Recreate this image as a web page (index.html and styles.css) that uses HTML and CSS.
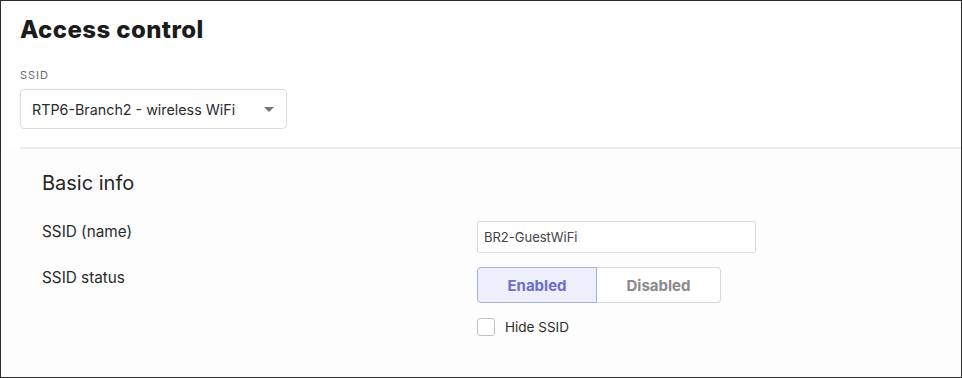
FILE: index.html
```html
<!DOCTYPE html>
<html lang="en">
  <head>
    <meta charset="UTF-8" />
    <meta name="viewport" content="width=device-width, initial-scale=1.0" />
    <title>Access control</title>
    <link rel="stylesheet" href="styles.css">
  </head>

  <body>
    <div class="marco">
      <div class="cabecera">
        <h1>Access control</h1>
        <label class="etiqueta" for="ssid">SSID</label>
        <div class="selector" id="ssid">
          <span>RTP6-Branch2 - wireless WiFi</span>
          <span class="flecha"></span>
        </div>
      </div>

      <div class="seccion">
        <h2>Basic info</h2>

        <div class="fila">
          <span class="nombre">SSID (name)</span>
          <input type="text" class="campo" value="BR2-GuestWiFi" />
        </div>

        <div class="fila">
          <span class="nombre">SSID status</span>
          <div class="control">
            <div class="segmentos">
              <button class="activo">Enabled</button>
              <button>Disabled</button>
            </div>
            <label class="casilla">
              <span class="caja"></span>
              Hide SSID
            </label>
          </div>
        </div>
      </div>
    </div>
  </body>
</html>
```

FILE: styles.css
```css
* {
  box-sizing: border-box;
}

body {
  margin: 0;
  font-family: Inter, "Noto Sans", sans-serif;
  color: #222;
}

.marco {
  width: 962px;
  height: 378px;
  border: 1px solid #2b2b2b;
  background-color: #fff;
  overflow: hidden;
}

.cabecera {
  padding: 14px 0 18px 0;
  border-bottom: 2px solid #ececec;
  margin-left: 19px;
}

h1 {
  margin: 0;
  font-size: 24px;
  font-weight: 800;
  letter-spacing: 0.4px;
  line-height: 30px;
  color: #1c1c1c;
}

.etiqueta {
  display: block;
  margin-top: 23px;
  font-size: 11px;
  letter-spacing: 1px;
  color: #6b6b6b;
  line-height: 14px;
}

.selector {
  margin-top: 7px;
  width: 267px;
  height: 40px;
  border: 1px solid #dcdcdc;
  border-radius: 4px;
  display: flex;
  align-items: center;
  justify-content: space-between;
  padding: 0 12px 0 11px;
  font-size: 14.3px;
  color: #2c2c2c;
}

.flecha {
  width: 0;
  height: 0;
  border-left: 5px solid transparent;
  border-right: 5px solid transparent;
  border-top: 5px solid #777;
}

.seccion {
  padding: 21px 0 0 41px;
  background-color: #fdfdfd;
  height: 230px;
}

h2 {
  margin: 0 0 25px;
  font-size: 20px;
  font-weight: 400;
  line-height: 26px;
  color: #262626;
}

.fila {
  display: flex;
  align-items: flex-start;
  margin-bottom: 14px;
}

.nombre {
  width: 435px;
  font-size: 15.3px;
  line-height: 22px;
  color: #2a2a2a;
}

.campo {
  width: 279px;
  height: 32px;
  border: 1px solid #dcdcdc;
  border-radius: 2px;
  padding: 0 6px;
  font-family: inherit;
  font-size: 13px;
  color: #444;
  background-color: #fff;
  outline: none;
}

.segmentos {
  display: flex;
}

.segmentos button {
  width: 124px;
  height: 36px;
  border: 1px solid #d9d9d9;
  border-left: none;
  border-radius: 0 4px 4px 0;
  background-color: #fff;
  font-family: inherit;
  font-size: 15px;
  font-weight: 700;
  color: #8a8a8a;
  cursor: pointer;
}

.segmentos button.activo {
  width: 120px;
  border: 1px solid #a9acdf;
  border-radius: 4px 0 0 4px;
  background-color: #eeeffd;
  color: #6c6ec9;
}

.casilla {
  display: flex;
  align-items: center;
  gap: 10px;
  margin-top: 15px;
  font-size: 13.5px;
  color: #2c2c2c;
}

.caja {
  width: 18px;
  height: 18px;
  border: 1px solid #c4c4c4;
  border-radius: 3px;
  background-color: #fff;
}
```
